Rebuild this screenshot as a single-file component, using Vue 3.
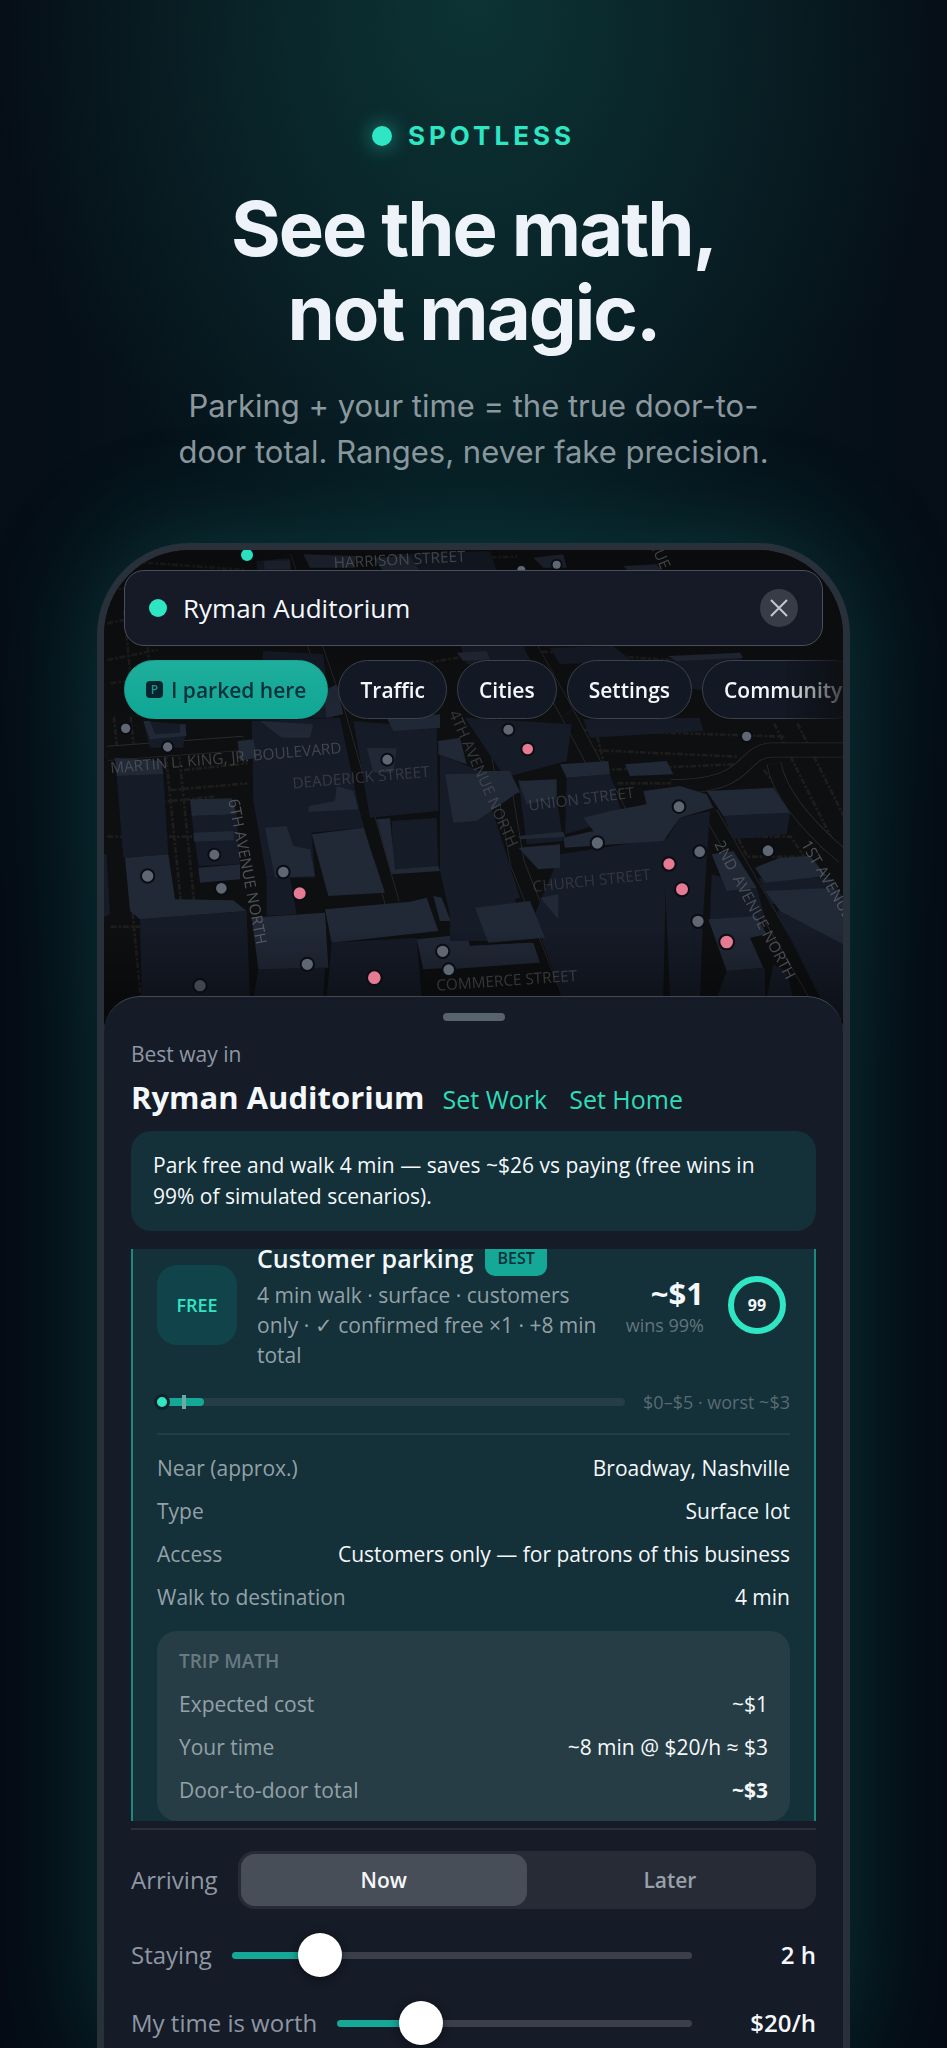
<template>
  <main class="page">
    <header class="hero">
      <p class="brand"><span class="brand-dot"></span>SPOTLESS</p>
      <h1>See the math,<br>not magic.</h1>
      <p class="tagline">Parking + your time = the true door-to-<br>door total. Ranges, never fake precision.</p>
    </header>

    <section class="phone">
      <div class="map-area">
        <svg class="map" viewBox="0 0 2217 1422" preserveAspectRatio="xMidYMin slice" aria-label="Map of downtown Nashville">
          <defs>
            <linearGradient id="shade" x1="0" y1="0" x2="0" y2="1">
              <stop offset="0" stop-color="#000" stop-opacity="0.25" />
              <stop offset="0.4" stop-color="#000" stop-opacity="0" />
              <stop offset="0.8" stop-color="#000" stop-opacity="0" />
              <stop offset="1" stop-color="#000" stop-opacity="0.45" />
            </linearGradient>
          </defs>
          <rect width="2217" height="1422" fill="#0e0f11" />

          <!-- Tree lines and small lanes -->
          <g class="lanes">
            <path v-for="lane in lanes" :key="lane" :d="lane" />
          </g>

          <!-- Avenues -->
          <g v-for="road in roads" :key="road">
            <path class="road-edge" :d="road" />
            <path class="road" :d="road" />
          </g>

          <g v-for="(area, i) in areas" :key="i" :transform="area.shift">
            <polygon v-for="p in area.walls" :key="p" class="wall" :points="p" />
            <polygon v-for="p in area.roofs" :key="p" class="roof" :points="p" />
          </g>

          <rect width="2217" height="1422" fill="url(#shade)" />

          <g class="streets">
            <text v-for="s in streets" :key="s.name" :transform="`translate(${s.x} ${s.y}) rotate(${s.turn})`" :opacity="s.fade">{{ s.name }}</text>
          </g>

          <circle v-for="(d, i) in dots" :key="i" :class="['dot', d[3]]" :cx="d[0]" :cy="d[1]" :r="d[2]" />
        </svg>

        <div class="map-controls">
          <div class="search">
            <span class="search-dot"></span>
            <input v-model="query" type="text" aria-label="Destination">
            <button class="clear" type="button" aria-label="Clear" @click="query = ''">
              <svg viewBox="0 0 18 18" width="18" height="18"><path d="M1 1l16 16M17 1L1 17" /></svg>
            </button>
          </div>
          <div class="chips">
            <button class="chip chip-main" type="button"><span class="p-icon">P</span>I parked here</button>
            <button v-for="c in chips" :key="c" class="chip" type="button">{{ c }}</button>
          </div>
        </div>
      </div>

      <div class="sheet">
        <div class="handle"></div>
        <p class="eyebrow">Best way in</p>
        <div class="title-row">
          <h2>Ryman Auditorium</h2>
          <a href="#work">Set Work</a>
          <a href="#home">Set Home</a>
        </div>
        <p class="notice">Park free and walk 4 min — saves ~$26 vs paying (free wins in 99% of simulated scenarios).</p>

        <div class="results">
          <article class="card">
            <div class="summary">
              <div class="free">FREE</div>
              <div class="info">
                <h3>Customer parking <span class="best">BEST</span></h3>
                <p>4 min walk · surface · customers only · ✓ confirmed free ×1 · +8 min total</p>
              </div>
              <div class="price">
                <strong>~$1</strong>
                <small>wins 99%</small>
              </div>
              <div class="ring">99</div>
            </div>

            <div class="range">
              <div class="range-track">
                <span class="range-fill"></span>
                <span class="range-tick"></span>
                <span class="range-dot"></span>
              </div>
              <span>$0–$5 · worst ~$3</span>
            </div>

            <dl class="details">
              <div v-for="d in details" :key="d.label" class="line">
                <dt>{{ d.label }}</dt>
                <dd>{{ d.value }}</dd>
              </div>
            </dl>

            <div class="trip">
              <h4>TRIP MATH</h4>
              <dl>
                <div v-for="t in trip" :key="t.label" class="line">
                  <dt>{{ t.label }}</dt>
                  <dd :class="{ strong: t.strong, medium: t.medium }">{{ t.value }}</dd>
                </div>
              </dl>
            </div>
          </article>
        </div>

        <div class="controls">
          <div class="control">
            <span>Arriving</span>
            <div class="segmented">
              <button type="button" :class="{ active: arriving === 'now' }" @click="arriving = 'now'">Now</button>
              <button type="button" :class="{ active: arriving === 'later' }" @click="arriving = 'later'">Later</button>
            </div>
          </div>
          <div class="control">
            <label for="staying">Staying</label>
            <input id="staying" v-model.number="hours" type="range" min="0.5" max="10" step="0.5" :style="{ '--p': (hours - 0.5) / 9.5 }">
            <output for="staying">{{ hours }} h</output>
          </div>
          <div class="control">
            <label for="worth">My time is worth</label>
            <input id="worth" v-model.number="rate" type="range" min="0" max="100" step="5" :style="{ '--p': rate / 100 }">
            <output for="worth">${{ rate }}/h</output>
          </div>
        </div>
      </div>
    </section>
  </main>
</template>

<script setup>
import { ref } from 'vue';

const query = ref('Ryman Auditorium');
const arriving = ref('now');
const hours = ref(2);
const rate = ref(20);

const chips = ['Traffic', 'Cities', 'Settings', 'Community'];

const details = [
  { label: 'Near (approx.)', value: 'Broadway, Nashville' },
  { label: 'Type', value: 'Surface lot' },
  { label: 'Access', value: 'Customers only — for patrons of this business' },
  { label: 'Walk to destination', value: '4 min' }
];

const trip = [
  { label: 'Expected cost', value: '~$1', medium: true },
  { label: 'Your time', value: '~8 min @ $20/h ≈ $3' },
  { label: 'Door-to-door total', value: '~$3', strong: true }
];

// Map geometry, drawn at three units per pixel
const lanes = [
  'M30 500L110 1344', 'M80 500L170 1344', 'M10 860H360', 'M20 1130H130', 'M130 760L330 740',
  'M180 560L230 1050', 'M220 560L270 1050', 'M250 600L420 580', 'M240 660L430 640', 'M200 720L430 700',
  'M1440 540L2040 560', 'M1460 600L1900 620', 'M1500 660L1960 640', 'M1540 700L1800 700',
  'M2010 520L2200 900', 'M2080 520L2260 880', 'M1980 660L2160 900', 'M20 30L420 60', 'M20 120L300 90',
  'M10 220L160 190', 'M10 330L160 300', 'M900 30L1240 20', 'M1240 300L1700 330', 'M900 350L1200 300',
  'M20 400L170 380', 'M60 180L90 480', 'M120 180L150 480', 'M1900 860H2060L2100 920H1930Z', 'M1480 560L1500 640'
];

const roads = [
  'M540 20L700 480L865 1060', 'M1040 20L1120 240L1240 940L1400 1344', 'M1390 490L1570 830',
  'M1150 60L1390 490', 'M1820 790L2140 1344', 'M10 610L420 580', 'M1700 710C1960 710 1900 600 2010 600H2217',
  'M2010 640Q2030 760 2217 920'
];

const areas = [
  {
    shift: 'translate(-42 483)',
    walls: [
      '80,195 220,190 235,430 100,440', '305,315 440,310 450,460 325,465', '150,625 470,600 480,860 155,860',
      '485,30 750,20 775,140 820,350 665,365 675,500 530,500 490,270', '505,775 705,770 700,860 490,860',
      '530,500 600,500 620,610 530,615', '725,695 980,680 995,860 710,860', '790,30 1040,50 1045,300 840,320',
      '905,330 1040,320 1045,470 910,475', '1050,130 1170,180 1290,560 1155,600 1180,690 1090,660 1050,480',
      '0,420 50,430 60,610 40,620', '160,30 290,40 280,110 180,110'
    ],
    roofs: [
      '75,140 215,150 220,190 80,195', '300,265 425,262 440,310 305,315', '310,365 430,360 432,388 312,392',
      '325,470 450,460 450,505 330,515', '105,440 235,430 255,565 430,568 470,600 150,625 120,600',
      '525,350 590,345 610,405 660,415 675,495 555,500', '510,30 670,40 660,80 575,80', '655,285 735,270 740,225 790,240 805,295 655,303',
      '665,370 820,350 885,545 715,555', '485,620 705,605 715,770 505,775', '705,595 960,572 1010,560 1045,660 725,695',
      '1030,555 1055,560 1082,630 1050,630', '830,110 920,112 910,185 850,185', '860,325 900,322 915,475 1045,465 1050,480 905,490',
      '1045,90 1110,80 1130,160 1045,130', '1065,190 1250,185 1290,240 1160,330 1090,335',
      '980,685 1130,670 1140,705 1330,695 1350,755 1000,775', '443,90 490,85 500,140 450,150', '160,30 180,85 290,75 285,40 270,40 270,65 195,70 180,30'
    ]
  },
  {
    shift: 'translate(1038 483)',
    walls: [
      '45,20 365,40 350,150 165,200', '0,340 110,340 200,580 240,570 120,690 0,690', '350,200 480,190 520,320 345,370',
      '205,205 320,260 340,390 230,400', '330,430 650,380 640,860 340,860 250,620', '640,400 690,320 780,300 760,600 750,860 660,860',
      '820,315 1020,305 1010,370 850,385', '785,490 920,530 945,620 780,625', '830,780 945,770 945,860 800,860',
      '925,500 1140,500 1180,560 960,580', '980,600 1180,560 1180,930 1110,860', '970,760 1010,780 1030,860 950,860'
    ],
    roofs: [
      '330,160 475,150 480,190 350,200', '525,160 650,150 670,190 540,195', '205,210 320,205 320,260 230,280',
      '580,240 690,225 770,250 790,290 690,320 640,390 345,410 340,380 430,360 400,320 480,300 590,280',
      '770,240 970,230 1020,305 820,315', '205,375 340,362 345,378 210,385', '205,410 330,400 330,470 265,475',
      '785,430 850,420 920,530 830,540', '915,470 990,440 1080,435 1130,495 945,515', '945,540 1150,530 1180,580 1180,700 990,600',
      '775,625 920,615 950,670 900,680 940,770 830,780', '75,590 240,570 285,680 115,695', '90,180 180,180 210,245 110,250',
      '60,705 240,695 260,755 0,775', '270,560 325,550 325,625'
    ]
  },
  {
    shift: 'translate(-42 -57)',
    walls: ['900,70 1200,60 1220,120 950,120', '500,90 600,80 605,125 500,125', '520,360 700,370 720,560 500,560', '1110,340 1300,340 1320,400 1130,400'],
    roofs: ['640,70 800,75 790,110 660,110', '520,90 600,88 600,115 525,115', '850,80 960,75 990,120 880,120', '700,480 740,460 760,550 710,560', '890,560 1050,550 1050,590 910,600']
  },
  {
    shift: 'translate(1038 -57)',
    walls: ['300,350 490,345 545,390 330,400', '660,385 870,370 880,400 770,480 700,470', '400,565 750,560 760,600 420,620'],
    roofs: ['250,80 340,70 350,110 280,110', '520,105 620,100 640,125 540,125', '20,365 110,360 120,385 40,390', '655,375 870,365 880,380 680,390']
  }
];

const streets = [
  { name: 'HARRISON STREET', x: 690, y: 55, turn: -3, fade: 0.55 },
  { name: 'MARTIN L. KING, JR. BOULEVARD', x: 20, y: 670, turn: -5, fade: 0.55 },
  { name: 'DEADERICK STREET', x: 567, y: 716, turn: -5, fade: 0.4 },
  { name: '6TH AVENUE NORTH', x: 373, y: 750, turn: 79, fade: 0.75 },
  { name: '4TH AVENUE NORTH', x: 1034, y: 490, turn: 66, fade: 0.45 },
  { name: 'UNION STREET', x: 1276, y: 782, turn: -7, fade: 0.45 },
  { name: 'CHURCH STREET', x: 1288, y: 1026, turn: -6, fade: 0.35 },
  { name: 'COMMERCE STREET', x: 998, y: 1322, turn: -4, fade: 0.45 },
  { name: '2ND  AVENUE NORTH', x: 1830, y: 882, turn: 62, fade: 0.65 },
  { name: '1ST AVENUE NORTH', x: 2090, y: 882, turn: 60, fade: 0.7 },
  { name: 'AVENUE', x: 1600, y: -100, turn: 66, fade: 0.6 }
];

const dots = [
  [429, 15, 21, 'free'], [452, 72, 14, 'free'], [65, 535, 17], [191, 591, 17], [131, 978, 20], [331, 914, 18],
  [352, 1015, 19], [538, 966, 19], [587, 1030, 21, 'paid'], [850, 629, 18], [1213, 539, 18], [1271, 597, 19, 'paid'],
  [1928, 559, 17], [1725, 770, 19], [1480, 879, 20], [1787, 905, 19], [1992, 902, 19], [1695, 942, 20, 'paid'],
  [1734, 1018, 21, 'paid'], [1782, 1114, 20], [1868, 1176, 22, 'paid'], [610, 1243, 20], [811, 1283, 22, 'paid'],
  [1016, 1204, 20], [1034, 1259, 19], [288, 1307, 20, 'dim'], [1358, 44, 15], [1252, 60, 15]
];
</script>

<style>
body {
  margin: 0;
  background: #050b14;
}
</style>

<style scoped>
* {
  box-sizing: border-box;
}

h1, h2, h3, h4, p, dl, dd {
  margin: 0;
}

button, input {
  font-family: inherit;
}

.page {
  display: flex;
  flex-direction: column;
  overflow: hidden;
  min-height: 100vh;
  padding: 118px 97px 0;
  background:
    radial-gradient(ellipse 500px 560px at 50% 0, rgba(17, 72, 70, 0.6), transparent),
    radial-gradient(ellipse 60% 46% at 50% 20%, rgba(8, 42, 46, 0.5), transparent),
    #050b14;
  color: #f4f8fc;
  font-family: "Open Sans", "Noto Sans", sans-serif;
}

/* Heading */
.hero {
  font-family: Inter, sans-serif;
  text-align: center;
}

.brand {
  display: flex;
  align-items: center;
  justify-content: center;
  gap: 16px;
  color: #2fe6c4;
  font-size: 26px;
  font-weight: 700;
  line-height: 36px;
  letter-spacing: 4px;
}

.brand-dot {
  width: 20px;
  height: 20px;
  border-radius: 50%;
  background: #2fe6c4;
  box-shadow: 0 0 20px rgba(47, 230, 196, 0.6);
}

h1 {
  margin-top: 32px;
  color: #eef3fa;
  font-size: 76px;
  font-weight: 700;
  line-height: 84px;
  letter-spacing: -2px;
}

.tagline {
  margin-top: 29px;
  color: #8b989e;
  font-size: 31px;
  line-height: 46px;
}

/* Phone frame */
.phone {
  flex: 1;
  overflow: hidden;
  margin-top: 68px;
  border: 7px solid #28303a;
  border-bottom: 0;
  border-radius: 92px 92px 0 0;
  background: #151b27;
  box-shadow: 0 0 110px rgba(18, 130, 124, 0.36);
}

.map-area {
  position: relative;
  height: 474px;
  margin-bottom: -28px;
}

.map {
  position: absolute;
  inset: 0;
  width: 100%;
  height: 100%;
}

.wall { fill: #151b27; }
.roof { fill: #212836; }

.lanes path {
  fill: none;
  stroke: #1e1d1c;
  stroke-width: 8;
  stroke-dasharray: 18 6 8 5;
}

.road {
  fill: none;
  stroke: #0e0f11;
  stroke-width: 40;
}

.road-edge {
  fill: none;
  stroke: #2a2a2a;
  stroke-width: 45;
}

.streets text {
  fill: #666a70;
  font-family: "Open Sans", sans-serif;
  font-size: 46px;
  white-space: pre;
}

.dot {
  fill: #5f6772;
  stroke: #0a0d14;
  stroke-width: 6;
}

.dot.paid { fill: #e57a92; }
.dot.free { fill: #2be0c0; }
.dot.dim { fill: #3f464f; }

.map-controls {
  position: relative;
  padding: 20px 0 0 20px;
}

.search {
  display: flex;
  align-items: center;
  height: 76px;
  margin-right: 20px;
  padding: 0 24px;
  border: 1px solid #4a4f59;
  border-radius: 20px;
  background: #151a26;
}

.search-dot {
  flex: none;
  width: 18px;
  height: 18px;
  border-radius: 50%;
  background: #2fe6c4;
}

.search input {
  flex: 1;
  min-width: 0;
  padding: 0 16px;
  border: 0;
  outline: 0;
  background: none;
  color: #f4f8fc;
  font-size: 26px;
  line-height: 38px;
}

.clear {
  display: grid;
  place-items: center;
  width: 38px;
  height: 38px;
  padding: 0;
  border: 0;
  border-radius: 50%;
  background: #383c46;
}

.clear path {
  fill: none;
  stroke: #c3c8d0;
  stroke-width: 2;
}

.chips {
  display: flex;
  gap: 10px;
  overflow: hidden;
  margin-top: 14px;
  mask-image: linear-gradient(90deg, #000 92%, rgba(0, 0, 0, 0.2));
}

.chip {
  flex: none;
  height: 59px;
  padding: 0 21px;
  border: 1px solid #3c414b;
  border-radius: 30px;
  background: #121824;
  color: #f4f8fc;
  font-size: 21px;
  font-weight: 600;
}

.chip-main {
  display: flex;
  align-items: center;
  gap: 8px;
  border-color: #13a795;
  background: linear-gradient(#1fae9c, #10a695);
  color: #06303a;
}

.p-icon {
  width: 17px;
  height: 17px;
  border-radius: 4px;
  background: #06262f;
  color: #2b8f86;
  font-size: 12px;
  line-height: 17px;
}

/* Bottom sheet */
.sheet {
  position: relative;
  padding: 16px 27px 3px;
  border-top: 1px solid #434852;
  border-radius: 36px 36px 0 0;
  background: #151b27;
}

.handle {
  width: 62px;
  height: 8px;
  margin: 0 auto;
  border-radius: 4px;
  background: #58636d;
}

.eyebrow {
  margin-top: 18px;
  color: #8e97a3;
  font-size: 21px;
  line-height: 30px;
}

.title-row {
  display: flex;
  align-items: baseline;
  gap: 18px;
  margin-top: 6px;
  line-height: 44px;
}

.title-row h2 {
  font-size: 31px;
  font-weight: 700;
}

.title-row a {
  margin-right: 4px;
  color: #2fdcb8;
  font-size: 25px;
  text-decoration: none;
}

.notice {
  margin-top: 10px;
  padding: 19px 22px;
  border-radius: 20px;
  background: #143038;
  font-size: 21px;
  line-height: 31px;
}

/* Scrolled result list, clipped at both ends */
.results {
  overflow: hidden;
  margin-top: 18px;
}

.card {
  margin: -33px 0 -26px;
  padding: 22px 24px 24px;
  border: 2px solid #1b8a7e;
  border-radius: 22px;
  background: #143038;
}

.summary {
  display: flex;
  align-items: center;
}

.free {
  display: grid;
  flex: none;
  place-items: center;
  width: 80px;
  height: 80px;
  border-radius: 20px;
  background: #10444a;
  color: #2fe6c4;
  font-size: 18px;
  font-weight: 600;
}

.info {
  flex: 1;
  min-width: 0;
  margin-left: 20px;
}

.info h3 {
  display: flex;
  align-items: center;
  gap: 12px;
  height: 36px;
  font-size: 25px;
  font-weight: 600;
}

.best {
  padding: 0 12px;
  border-radius: 10px;
  background: #16a897;
  color: #06303a;
  font-size: 16px;
  line-height: 36px;
}

.info p {
  margin-top: 4px;
  color: #93a1a8;
  font-size: 21px;
  line-height: 30px;
}

.price {
  display: flex;
  flex-direction: column;
  align-items: flex-end;
  margin: 0 24px 0 20px;
}

.price strong {
  font-size: 31px;
  line-height: 40px;
}

.price small {
  color: #63747c;
  font-size: 18px;
  line-height: 24px;
}

.ring {
  display: grid;
  flex: none;
  place-items: center;
  width: 58px;
  height: 58px;
  margin-right: 4px;
  border: 6px solid #2fe6c4;
  border-radius: 50%;
  font-size: 16px;
  font-weight: 700;
}

.range {
  display: flex;
  align-items: center;
  gap: 18px;
  height: 28px;
  margin-top: 18px;
  color: #586b73;
  font-size: 18px;
}

.range-track {
  position: relative;
  flex: 1;
  height: 8px;
  border-radius: 4px;
  background: #253e46;
}

.range-fill {
  display: block;
  width: 10%;
  height: 100%;
  border-radius: 4px;
  background: #16a897;
}

.range-tick {
  position: absolute;
  top: -3px;
  left: 25px;
  width: 4px;
  height: 14px;
  background: #6fa9a4;
}

.range-dot {
  position: absolute;
  top: -4px;
  left: -3px;
  width: 16px;
  height: 16px;
  border: 3px solid #10202a;
  border-radius: 50%;
  background: #2fe6c4;
}

.details {
  margin-top: 17px;
  padding: 12px 0;
  border-top: 2px solid #233d45;
}

.line {
  display: flex;
  justify-content: space-between;
  font-size: 21px;
  line-height: 43px;
}

.line dt {
  color: #93a1a8;
}

.line .medium {
  font-weight: 500;
}

.line .strong {
  font-weight: 700;
}

.trip {
  padding: 9px 22px;
  border-radius: 20px;
  background: #273d45;
}

.trip h4 {
  color: #677a82;
  font-size: 19px;
  font-weight: 600;
  line-height: 43px;
}

/* Trip inputs */
.controls {
  display: flex;
  flex-direction: column;
  gap: 24px;
  margin-top: 7px;
  padding-top: 21px;
  border-top: 2px solid #2a2f3a;
}

.control {
  display: flex;
  align-items: center;
  gap: 20px;
  min-height: 44px;
  color: #8e97a3;
  font-size: 24px;
  line-height: 32px;
}

.segmented {
  display: flex;
  flex: 1;
  height: 58px;
  padding: 3px;
  border-radius: 16px;
  background: #262b36;
}

.segmented button {
  flex: 1;
  border: 0;
  border-radius: 14px;
  background: none;
  color: #98a0aa;
  font-size: 21px;
  font-weight: 600;
}

.segmented .active {
  background: #484e58;
  color: #f4f8fc;
}

.control input {
  flex: 1;
  min-width: 0;
  height: 44px;
  margin: 0;
  appearance: none;
  background: none;
}

.control input::-webkit-slider-runnable-track {
  height: 7px;
  border-radius: 4px;
  background: linear-gradient(#16a897, #16a897) 0 0 / calc(22px + (100% - 44px) * var(--p)) 100% no-repeat #3a3f4a;
}

.control input::-webkit-slider-thumb {
  width: 44px;
  height: 44px;
  margin-top: -19px;
  appearance: none;
  border-radius: 50%;
  background: #fff;
  box-shadow: 0 2px 8px rgba(0, 0, 0, 0.5);
}

.control output {
  width: 104px;
  color: #f4f8fc;
  font-weight: 600;
  text-align: right;
}
</style>
